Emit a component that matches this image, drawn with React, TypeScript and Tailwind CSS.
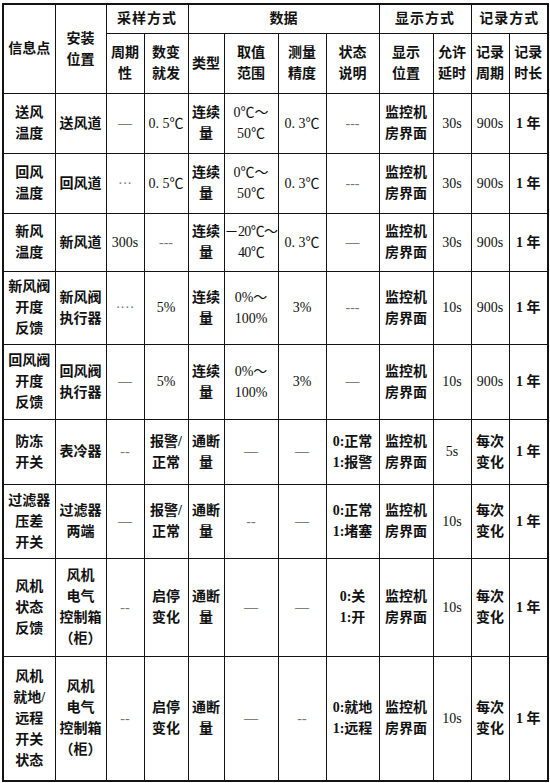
import React from "react";

const widths = [52, 51, 38, 44, 36, 54, 48, 53, 54, 38, 38, 39];

type Cell = { t: string; faint?: boolean; tight?: boolean };

const rows: { h: number; cells: (string | Cell)[] }[] = [
  { h: 60, cells: ["送风\n温度", "送风道", "—", "0. 5℃", "连续\n量", "0℃～\n50℃", "0. 3℃", { t: "---", faint: true }, "监控机\n房界面", "30s", "900s", "1 年"] },
  { h: 60, cells: ["回风\n温度", "回风道", { t: "···", faint: true }, "0. 5℃", "连续\n量", "0℃～\n50℃", "0. 3℃", { t: "---", faint: true }, "监控机\n房界面", "30s", "900s", "1 年"] },
  { h: 58, cells: ["新风\n温度", "新风道", "300s", { t: "---", faint: true }, "连续\n量", { t: "－20℃～\n40℃", tight: true }, "0. 3℃", "—", "监控机\n房界面", "30s", "900s", "1 年"] },
  { h: 73, cells: ["新风阀\n开度\n反馈", "新风阀\n执行器", { t: "····", faint: true }, "5%", "连续\n量", "0%～\n100%", "3%", { t: "---", faint: true }, "监控机\n房界面", "10s", "900s", "1 年"] },
  { h: 75, cells: ["回风阀\n开度\n反馈", "回风阀\n执行器", "—", "5%", "连续\n量", "0%～\n100%", "3%", "—", "监控机\n房界面", "10s", "900s", "1 年"] },
  { h: 65, cells: ["防冻\n开关", "表冷器", { t: "--", faint: true }, "报警/\n正常", "通断\n量", "—", "—", "0:正常\n1:报警", "监控机\n房界面", "5s", "每次\n变化", "1 年"] },
  { h: 74, cells: ["过滤器\n压差\n开关", "过滤器\n两端", "—", "报警/\n正常", "通断\n量", { t: "--", faint: true }, "—", "0:正常\n1:堵塞", "监控机\n房界面", "10s", "每次\n变化", "1 年"] },
  { h: 98, cells: ["风机\n状态\n反馈", "风机\n电气\n控制箱\n（柜）", { t: "--", faint: true }, "启停\n变化", "通断\n量", "—", "—", "0:关\n1:开", "监控机\n房界面", "10s", "每次\n变化", "1 年"] },
  { h: 125, cells: ["风机\n就地/\n远程\n开关\n状态", "风机\n电气\n控制箱\n（柜）", { t: "--", faint: true }, "启停\n变化", "通断\n量", "—", { t: "--", faint: true }, "0:就地\n1:远程", "监控机\n房界面", "10s", "每次\n变化", "1 年"] },
];

const td = "border border-[#141414] text-center align-middle whitespace-pre-line p-0 leading-[21px]";
const hasCJK = (s: string) => /[\u4e00-\u9fff]/.test(s);

export default function App() {
  return (
    <div className="w-[550px] h-[783px] bg-white pt-[3px] pl-[2px] text-[#111]" style={{ fontFamily: '"Liberation Serif", "Noto Sans CJK SC", serif' }}>
      <table className="table-fixed border-collapse w-[545px] border-2 border-[#141414] text-[14px] font-semibold">
        <colgroup>
          {widths.map((w, i) => (
            <col key={i} style={{ width: w }} />
          ))}
        </colgroup>
        <thead>
          <tr className="h-[29px]">
            <th rowSpan={2} className={td + " font-semibold"}>信息点</th>
            <th rowSpan={2} className={td + " font-semibold"}>{"安装\n位置"}</th>
            <th colSpan={2} className={td + " font-semibold tracking-[1px]"}>采样方式</th>
            <th colSpan={4} className={td + " font-semibold"}>数据</th>
            <th colSpan={2} className={td + " font-semibold tracking-[1px]"}>显示方式</th>
            <th colSpan={2} className={td + " font-semibold tracking-[1px]"}>记录方式</th>
          </tr>
          <tr className="h-[60px]">
            {["周期\n性", "数变\n就发", "类型", "取值\n范围", "测量\n精度", "状态\n说明", "显示\n位置", "允许\n延时", "记录\n周期", "记录\n时长"].map((t, i) => (
              <th key={i} className={td + " font-semibold"}>{t}</th>
            ))}
          </tr>
        </thead>
        <tbody>
          {rows.map((r, ri) => (
            <tr key={ri} style={{ height: r.h }}>
              {r.cells.map((c, ci) => {
                const cell: Cell = typeof c === "string" ? { t: c } : c;
                return (
                  <td
                    key={ci}
                    className={
                      td +
                      (cell.faint ? " text-[#777] font-normal" : hasCJK(cell.t) ? "" : " font-normal") +
                      (cell.tight ? " whitespace-pre tracking-[-0.6px] overflow-visible" : "")
                    }
                  >
                    {cell.t}
                  </td>
                );
              })}
            </tr>
          ))}
        </tbody>
      </table>
    </div>
  );
}
